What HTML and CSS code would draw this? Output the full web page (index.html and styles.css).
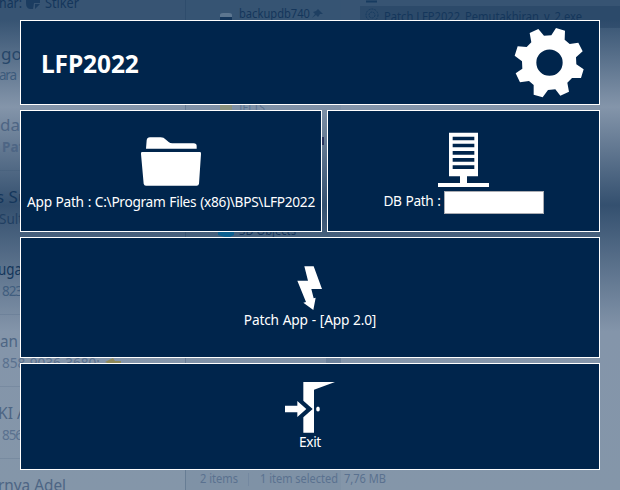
FILE: index.html
```html
<!DOCTYPE html>
<html lang="id">
<head>
<meta charset="utf-8">
<title>LFP2022</title>
<link rel="stylesheet" href="styles.css">
</head>
<body>
<svg class="backdrop" width="620" height="490" viewBox="0 0 620 490">
  <rect x="186" width="155" height="490" fill="#385477" opacity=".06"/>
  <rect x="360" y="6" width="260" height="22" fill="#0b2b4c" opacity=".22"/>
  <path d="M185.5 0V490" stroke="#143558" opacity=".25"/>
  <path d="M0 170.5H20M0 314.5H20M0 386.5H20M0 458.5H20" stroke="#143558" opacity=".1"/>
  <g class="dark">
    <text x="-1" y="8" font-size="13.5" textLength="23" lengthAdjust="spacingAndGlyphs">har:</text>
    <text x="45" y="8" font-size="13.5" textLength="34" lengthAdjust="spacingAndGlyphs">Stiker</text>
    <path d="M26 0H40V3L34 3 33 9H31Q26 9 26 3ZM35 9V4H40Z" opacity=".8"/>
    <text x="239" y="18" font-size="12.5" textLength="71" lengthAdjust="spacingAndGlyphs">backupdb740</text>
    <path d="M220 17V15Q220 13 223 13H229Q232 13 232 15V17Z" fill="#5c7690"/>
    <rect x="220" y="17" width="12" height="4"/>
    <path d="M318 9l5 5-3 0-2 3-2-2-4 3 3-4-2-2 3-1z" opacity=".7"/>
    <circle cx="372" cy="15" r="6" fill="none" stroke="#173b60" stroke-dasharray="2 1"/>
    <circle cx="372" cy="15" r="3" fill="none" stroke="#173b60" stroke-dasharray="2 1"/>
    <path d="M366 1.5H377" stroke="#173b60" stroke-width="2"/>
    <text x="384" y="21" font-size="12.5" textLength="198" lengthAdjust="spacingAndGlyphs">Patch LFP2022_Pemutakhiran_v_2.exe</text>
    <text x="-4" y="203" font-size="17">s Su</text>
    <text x="-2" y="275" font-size="17" textLength="24" lengthAdjust="spacingAndGlyphs">uga</text>
    <text x="239" y="235" font-size="12.5" textLength="57" lengthAdjust="spacingAndGlyphs">3D Objects</text>
    <path d="M218 229h16v6l-6 3-10-3z" fill="#0b5f8f"/>
  </g>
  <g class="mid">
    <text x="1" y="60" font-size="17" fill="#264669">go</text>
    <text x="0" y="131" font-size="17">dat</text>
    <text x="0" y="347" font-size="17" textLength="18" lengthAdjust="spacingAndGlyphs">an</text>
    <text x="-2" y="419" font-size="17" textLength="29" lengthAdjust="spacingAndGlyphs">KI A</text>
    <text x="-2" y="491" font-size="17" textLength="68" lengthAdjust="spacingAndGlyphs">rnya Adel</text>
    <text x="2" y="152" font-size="13.5" font-weight="700">Pat</text>
  </g>
  <g class="faint">
    <text x="-1" y="80" font-size="13.5" textLength="18" fill="#3d5b7c">ara</text>
    <text x="-1" y="224" font-size="13.5" fill="#213f62">Sult</text>
    <text x="2" y="296" font-size="13.5" textLength="21" fill="#405d7e">823</text>
    <text x="2" y="368" font-size="13.5" textLength="98" lengthAdjust="spacingAndGlyphs">858-9036-3680:</text>
    <text x="2" y="440" font-size="13.5" textLength="21">856</text>
    <path d="M105 362l8-4 2 3h6v4h-9z" fill="#8f8958"/>
    <rect x="220" y="105" width="12" height="7" fill="#8b927c"/>
    <text x="239" y="112" font-size="12.5" textLength="26" lengthAdjust="spacingAndGlyphs">IELTS</text>
    <text x="200" y="483" font-size="12.5" textLength="38" lengthAdjust="spacingAndGlyphs">2 items</text>
    <path d="M248.500 473V486" stroke="#7488a0"/>
    <text x="260" y="483" font-size="12.5" textLength="78" lengthAdjust="spacingAndGlyphs">1 item selected</text>
    <text x="344" y="483" font-size="12.5" textLength="42" lengthAdjust="spacingAndGlyphs">7,76 MB</text>
    <path d="M323 137v8" stroke="#28345e" stroke-width="2"/>
    <rect x="326" y="358" width="15" height="5" opacity=".5"/>
  </g>
</svg>
<main class="launcher">
  <header class="tile header">
    <h1>LFP2022</h1>
    <svg class="gear" width="70" height="70" viewBox="612 84 210 210"><path fill="#fff" fill-rule="evenodd" d="M659 99L685 87 702 107 724 106 738 84 765 92 764 119 779 132 805 128 818 154 798 172 799 193 821 208 813 234 786 234 772 248 777 275 751 287 736 268 714 270 698 292 671 284 671 255 657 243 630 247 617 220 637 206 636 184 614 167 623 139 650 141 664 127ZM679 188a39.5 39.5 0 1 0 79 0a39.5 39.5 0 1 0-79 0Z"/></svg>
  </header>
  <div class="paths">
    <section class="tile app-path">
      <svg width="62" height="50" viewBox="420 93 186 150" fill="#fff"><path d="M438 131L440 106Q441 97 450 97H482Q491 97 498 104L506 111Q510 115 517 115H581Q590 115 590 123V131ZM426 141H600Q604 141 603 147L597 236Q596 242 590 242H438Q432 242 431 236L423 147Q422 141 426 141Z"/></svg>
      <span class="label">App Path : C:\Program Files (x86)\BPS\LFP2022</span>
    </section>
    <section class="tile db-path">
      <svg width="51" height="55" viewBox="84 79 153 165" fill="#fff"><path fill-rule="evenodd" d="M117 81H204V212H171V232H237V244H84V232H150V212H117ZM128 93V104H193V93ZM128 114V125H193V114ZM128 136V147H193V136ZM128 157V168H193V157ZM128 179V190H193V179Z"/></svg>
      <label class="field"><span class="label">DB Path :</span><input type="text"></label>
    </section>
  </div>
  <section class="tile patch">
    <svg width="26" height="45" viewBox="217 33 78 135" fill="#fff"><path d="M239 34H267L292 102H260L267 130 273 128 266 165 236 143 244 141 218 77H250Z"/></svg>
    <span class="label">Patch App - [App 2.0]</span>
  </section>
  <section class="tile exit">
    <svg width="50" height="51" viewBox="180 51 150 153" fill="#fff"><path d="M235 51H330L267 74V203H235V157L263 132 235 107ZM180 122H217V108L244 132 217 156V142H180Z"/><ellipse cx="279" cy="132" rx="5.5" ry="7.5"/></svg>
    <span class="label">Exit</span>
  </section>
</main>
</body>
</html>
```
FILE: styles.css
```css
* { box-sizing: border-box; }

body {
  margin: 0;
  width: 620px;
  height: 490px;
  overflow: hidden;
  font-family: "Noto Sans", "Open Sans", sans-serif;
  color: #fff;
  background: linear-gradient(#375473 0, #375473 20px, #8495aa 107px, #34506f 205px, #8495aa 332px, #8496a9 490px);
}

svg { display: block; flex: none; }

.backdrop { position: absolute; top: 0; left: 0; }
.dark { fill: #14365b; }
.mid { fill: #4d6584; }
.faint { fill: #5a718f; }

.launcher {
  position: relative;
  display: grid;
  grid-template-rows: 85px 122px 121px 107px;
  gap: 5px;
  padding: 20px;
}

.tile {
  display: flex;
  flex-direction: column;
  align-items: center;
  border: 1px solid #fff;
  background: #00254c;
}

.header {
  flex-direction: row;
  justify-content: space-between;
  padding: 0 15px 0 20px;
}

h1 {
  margin: 2px 0 0;
  font-size: 24.5px;
  line-height: 32px;
  letter-spacing: -0.1px;
}

.paths {
  display: grid;
  grid-template-columns: 302px 273px;
  gap: 5px;
}

.label {
  font-size: 13.7px;
  line-height: 18px;
  letter-spacing: -0.35px;
  word-spacing: 0.6px;
  white-space: nowrap;
}

.app-path { padding-top: 25px; }
.app-path .label {
  margin-top: 7px;
  letter-spacing: -0.3px;
}

.db-path { padding-top: 21px; }
.field {
  display: flex;
  gap: 3px;
  margin-top: 4px;
}

.field .label { padding-top: 1px; }

.field input {
  width: 100px;
  height: 23px;
  padding: 0 4px;
  border: 1px solid #abadb3;
  background: #fff;
}

.patch { padding-top: 28px; }
.patch .label { letter-spacing: -0.2px; }
.exit { padding-top: 18px; }
```
